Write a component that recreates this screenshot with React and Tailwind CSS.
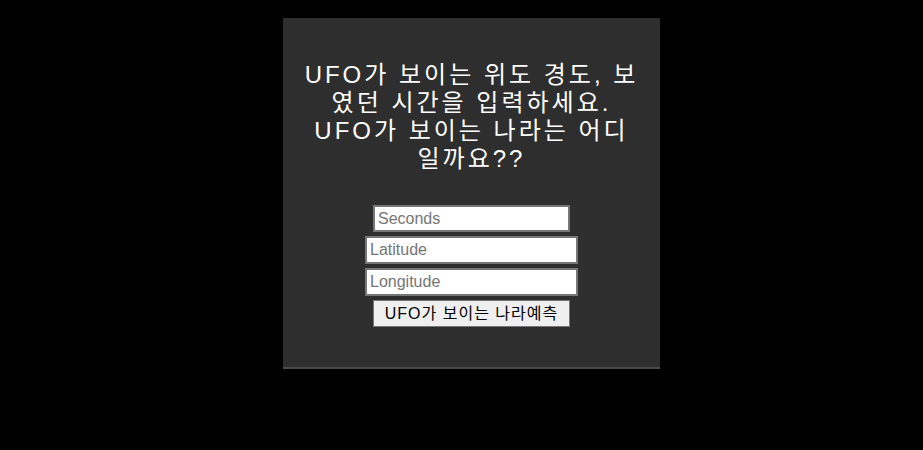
export default function App() {
  return (
    <div className="min-h-screen bg-black flex justify-center pl-[20px] pt-[18px] font-['Liberation_Sans','Noto_Sans_CJK_KR',sans-serif]">
      <div className="w-[377px] h-[351px] bg-[#2e2e2e] border-b-2 border-[#4a4a4a] flex flex-col items-center px-[10px] pt-[43px]">
        {/* 제목 */}
        <h1 className="w-full text-white text-[24px] leading-[28px] tracking-[3px] text-center">
          UFO가 보이는 위도 경도, 보<br />
          였던 시간을 입력하세요.<br />
          UFO가 보이는 나라는 어디<br />
          일까요??
        </h1>

        {/* 입력 폼 */}
        <div className="mt-[32px] flex flex-col items-center gap-[4px]">
          <input
            placeholder="Seconds"
            className="w-[197px] h-[27px] bg-white border-2 border-[#767676] px-[3px] text-[16px] placeholder:text-[#757575]"
          />
          <input
            placeholder="Latitude"
            className="w-[213px] h-[28px] bg-white border-2 border-[#767676] px-[3px] text-[16px] placeholder:text-[#757575]"
          />
          <input
            placeholder="Longitude"
            className="w-[213px] h-[28px] bg-white border-2 border-[#767676] px-[3px] text-[16px] placeholder:text-[#757575]"
          />
          <button className="w-[197px] h-[27px] bg-[#efefef] border border-[#767676] text-[16px] tracking-[1px] text-black">
            UFO가 보이는 나라예측
          </button>
        </div>
      </div>
    </div>
  );
}
